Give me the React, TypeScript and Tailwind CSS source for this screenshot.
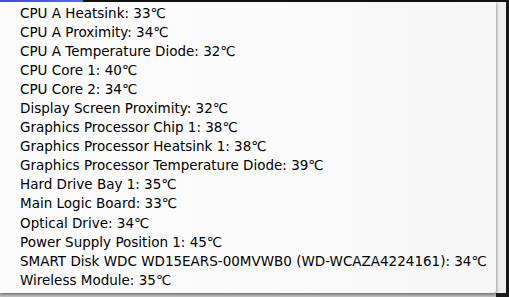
import React from 'react';

const readings = [
  'CPU A Heatsink: 33℃',
  'CPU A Proximity: 34℃',
  'CPU A Temperature Diode: 32℃',
  'CPU Core 1: 40℃',
  'CPU Core 2: 34℃',
  'Display Screen Proximity: 32℃',
  'Graphics Processor Chip 1: 38℃',
  'Graphics Processor Heatsink 1: 38℃',
  'Graphics Processor Temperature Diode: 39℃',
  'Hard Drive Bay 1: 35℃',
  'Main Logic Board: 33℃',
  'Optical Drive: 34℃',
  'Power Supply Position 1: 45℃',
  'SMART Disk WDC WD15EARS-00MVWB0 (WD-WCAZA4224161): 34℃',
  'Wireless Module: 35℃',
];

export default function App() {
  return (
    <div className="w-[509px] h-[297px] overflow-hidden bg-[#f2f2f2] flex flex-col">
      {/* menu bar edge */}
      <div className="h-[2px] flex shrink-0">
        <div className="w-[83px] bg-gradient-to-r from-[#3b4fd8] to-[#5a6ee8]" />
        <div className="flex-1 bg-[#111]" />
      </div>

      <div className="flex flex-1">
        {/* Menu */}
        <div className="w-[496px] h-[291px] bg-gradient-to-r from-[#fcfcfc] via-[#fbfbfb] to-[#f6f6f6] rounded-br-[4px] shadow-[1px_1px_3px_rgba(0,0,0,0.35)] pt-[2px] relative z-10">
          <ul
            className="text-[13.5px] leading-[19.05px] text-black"
            style={{ fontFamily: '"DejaVu Sans", "Noto Sans", sans-serif' }}
          >
            {readings.map((r) => (
              <li key={r} className="pl-[20px] whitespace-nowrap">
                {r}
              </li>
            ))}
          </ul>
        </div>
        <div className="flex-1 flex flex-col">
          <div className="flex-1 flex">
            <div className="flex-1 bg-[#efefef]" />
            <div className="w-[3px] bg-[#151515]" />
          </div>
          <div className="h-[4px] bg-[#1c1c1c]" />
        </div>
      </div>
      <div className="h-[4px] flex shrink-0 -mt-[4px]">
        <div className="w-[496px] bg-gradient-to-b from-[#9e9e9e] to-[#c2c2c2]" />
        <div className="flex-1 bg-[#1c1c1c]" />
      </div>
    </div>
  );
}
